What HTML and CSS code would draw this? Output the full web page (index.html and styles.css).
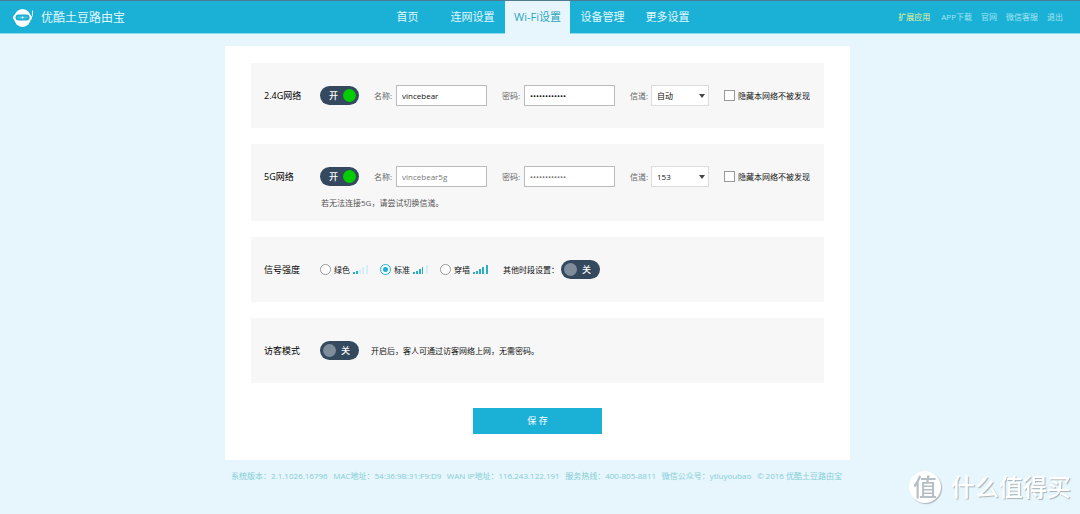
FILE: index.html
```html
<!DOCTYPE html>
<html lang="zh-CN">
<head>
<meta charset="utf-8">
<meta name="viewport" content="width=device-width, initial-scale=1">
<title>优酷土豆路由宝</title>
<link rel="stylesheet" href="styles.css">
</head>
<body>
<header class="header">
  <a class="brand" href="#">
    <svg class="brand-logo" viewBox="0 0 22 18" aria-hidden="true">
      <ellipse cx="10.5" cy="9" rx="8.5" ry="9" fill="#fff"/>
      <rect x="1" y="6" width="19" height="5" rx="2.5" fill="#fff"/>
      <rect x="3.5" y="5.5" width="14" height="6" rx="3" fill="#1bb1d6"/>
      <rect x="5.5" y="7.5" width="10" height="2" rx="1" fill="#4cc3df"/>
      <circle cx="10.5" cy="8.5" r="1" fill="#fff"/>
      <path d="M20.5 1.5V6.5L19 9" fill="none" stroke="#d9f4fa" stroke-width="1"/>
    </svg>
    <span>优酷土豆路由宝</span>
  </a>
  <nav class="tabs">
    <a class="tab" href="#">首页</a>
    <a class="tab" href="#">连网设置</a>
    <a class="tab tab-active" href="#" aria-current="page">Wi-Fi设置</a>
    <a class="tab" href="#">设备管理</a>
    <a class="tab" href="#">更多设置</a>
  </nav>
  <nav class="links">
    <a class="link link-hot" href="#">扩展应用</a>
    <a class="link" href="#">APP下载</a>
    <a class="link" href="#">官网</a>
    <a class="link" href="#">微信客服</a>
    <a class="link" href="#">退出</a>
  </nav>
</header>

<div class="page">
  <main class="panel">
    <form class="form">
      <section class="card">
        <div class="row">
          <h2 class="title">2.4G网络</h2>
          <button class="switch switch-on" type="button" role="switch" aria-checked="true" aria-label="2.4G网络">开</button>
          <div class="field">
            <label class="label" for="name24">名称:</label>
            <input class="input" id="name24" type="text" value="vincebear">
          </div>
          <div class="field">
            <label class="label" for="pass24">密码:</label>
            <input class="input" id="pass24" type="password" value="abcdefghijkl">
          </div>
          <div class="field">
            <label class="label label-narrow" for="chan24">信道:</label>
            <span class="picker">
              <select class="select" id="chan24"><option>自动</option></select>
              <svg class="picker-arrow" viewBox="0 0 6 4" aria-hidden="true"><path d="M0 0H6L3 4Z" fill="#444"/></svg>
            </span>
          </div>
          <label class="check"><input class="box" type="checkbox">隐藏本网络不被发现</label>
        </div>
      </section>

      <section class="card card-noted">
        <div class="row">
          <h2 class="title">5G网络</h2>
          <button class="switch switch-on" type="button" role="switch" aria-checked="true" aria-label="5G网络">开</button>
          <div class="field">
            <label class="label" for="name5">名称:</label>
            <input class="input input-dim" id="name5" type="text" value="vincebear5g">
          </div>
          <div class="field">
            <label class="label" for="pass5">密码:</label>
            <input class="input input-dim" id="pass5" type="password" value="abcdefghijkl">
          </div>
          <div class="field">
            <label class="label label-narrow" for="chan5">信道:</label>
            <span class="picker">
              <select class="select" id="chan5"><option>153</option></select>
              <svg class="picker-arrow" viewBox="0 0 6 4" aria-hidden="true"><path d="M0 0H6L3 4Z" fill="#444"/></svg>
            </span>
          </div>
          <label class="check"><input class="box" type="checkbox">隐藏本网络不被发现</label>
        </div>
        <p class="note">若无法连接5G，请尝试切换信道。</p>
      </section>

      <section class="card">
        <div class="row">
          <h2 class="title">信号强度</h2>
          <div class="options">
            <label class="option"><input class="radio" type="radio" name="power">绿色
              <svg class="bars" viewBox="0 0 15 9" aria-hidden="true">
                <path class="bars-lit" d="M0 7h2v2H0zM3 6h2v3H3z"/>
                <path class="bars-off" d="M6 4h2v5H6zM9 2h2v7H9zM13 0h2v9h-2z"/>
              </svg></label>
            <label class="option"><input class="radio" type="radio" name="power" checked>标准
              <svg class="bars" viewBox="0 0 15 9" aria-hidden="true">
                <path class="bars-lit" d="M0 7h2v2H0zM3 6h2v3H3zM6 4h2v5H6zM9 2h1v7H9z"/>
                <path class="bars-off" d="M13 0h2v9h-2z"/>
              </svg></label>
            <label class="option"><input class="radio" type="radio" name="power">穿墙
              <svg class="bars" viewBox="0 0 15 9" aria-hidden="true">
                <path class="bars-lit" d="M0 7h2v2H0zM3 6h2v3H3zM6 4h2v5H6zM9 2h2v7H9zM13 0h2v9h-2z"/>
              </svg></label>
          </div>
          <div class="period">
            <span id="period">其他时段设置：</span>
            <button class="switch" type="button" role="switch" aria-checked="false" aria-labelledby="period">关</button>
          </div>
        </div>
      </section>

      <section class="card">
        <div class="row">
          <h2 class="title">访客模式</h2>
          <button class="switch" type="button" role="switch" aria-checked="false" aria-label="访客模式">关</button>
          <p class="hint">开启后，客人可通过访客网络上网，无需密码。</p>
        </div>
      </section>

      <button class="save" type="submit">保 存</button>
    </form>
  </main>

  <footer class="footer">
    <span>系统版本：2.1.1026.16796</span>
    <span>MAC地址：54:36:9B:31:F9:D9</span>
    <span>WAN IP地址：116.243.122.191</span>
    <span>服务热线：400-805-8811</span>
    <span>微信公众号：ytluyoubao</span>
    <span>© 2016 优酷土豆路由宝</span>
  </footer>
</div>

<div class="stamp"><span class="stamp-badge">值</span><span>什么值得买</span></div>
</body>
</html>
```

FILE: styles.css
```css
* { box-sizing: border-box; }

body {
  margin: 0;
  min-height: 100vh;
  background: #e6f6fc;
  color: #111;
  font: 8px/12px "Open Sans", "Noto Sans CJK SC", sans-serif;
}

h2, p { margin: 0; font: inherit; }
a { color: inherit; text-decoration: none; }
button, input, select { font: inherit; }

/* Header */
.header {
  display: grid;
  grid-template-columns: 1fr auto 1fr;
  align-items: center;
  height: 34px;
  padding: 0 17px 0 12px;
  border-top: 1px solid #4d7c91;
  border-bottom: 1px solid #8fdbe8;
  background: #1bb1d6;
  color: #e2f7fc;
}
.brand { display: flex; align-items: center; gap: 7px; font-size: 12px; line-height: 16px; }
.brand-logo { width: 22px; height: 18px; }
.tabs { display: flex; height: 33px; }
.tab { width: 65px; font-size: 11px; line-height: 32px; text-align: center; white-space: nowrap; }
.tab-active { background: #e6f6fc; color: #2aa5bf; }
.links { display: flex; justify-content: flex-end; gap: 9px; padding-bottom: 2px; color: #a5e5f2; }
.link-hot { margin-right: 2px; color: #e9f59c; }

/* Panel */
.page { padding: 12px 5px 0 0; }
.panel {
  max-width: 625px;
  margin: 0 auto;
  padding: 17px 26px 26px;
  background: #fff;
}
.form { display: flex; flex-direction: column; gap: 16px; }
.card { padding: 22px 13px; background: #f7f7f7; }
.card-noted { padding-bottom: 12px; }
.row { display: flex; align-items: center; gap: 15px; min-height: 21px; white-space: nowrap; }
.title { flex: none; width: 41px; font-size: 9px; color: #000; }
.note { margin: 10px 0 0 57px; color: #555; }
.hint { margin-left: -3px; }

.field { display: flex; align-items: center; }
.label { width: 22px; color: #666; }
.label-narrow { width: 21px; }
.input {
  width: 91px;
  height: 21px;
  padding: 0 5px;
  border: 1px solid #bbb;
  border-radius: 0;
  background: #fff;
  color: #111;
}
.input-dim { color: #777; }

.picker { position: relative; }
.select {
  display: block;
  width: 58px;
  height: 21px;
  padding: 0 5px;
  border: 1px solid #ddd;
  border-radius: 0;
  appearance: none;
  background: #fff;
  color: #111;
}
.picker-arrow { position: absolute; top: 9px; right: 4px; width: 6px; height: 4px; pointer-events: none; }

.check { display: flex; align-items: center; gap: 3px; }
.box { appearance: none; width: 11px; height: 11px; margin: 0; border: 1px solid #999; background: #fff; }

/* Switch */
.switch {
  display: flex;
  flex: none;
  align-items: center;
  justify-content: space-between;
  width: 39px;
  height: 19px;
  padding: 0 9px 0 3px;
  border: 0;
  border-radius: 10px;
  background: #34495e;
  color: #fff;
  font-size: 9px;
  font-weight: 500;
}
.switch::before { content: ""; width: 13px; height: 13px; border-radius: 50%; background: #7f8c9a; }
.switch-on { flex-direction: row-reverse; padding: 0 3px 0 9px; }
.switch-on::before { background: #0c0; }

/* Signal strength */
.options { display: flex; }
.option { display: flex; align-items: center; gap: 3px; width: 60px; }
.radio {
  appearance: none;
  width: 11px;
  height: 11px;
  margin: 0;
  border: 1px solid #999;
  border-radius: 50%;
  background: #fff;
}
.radio:checked { border-color: #1bb1d6; background: radial-gradient(circle, #1bb1d6 0 2px, #fff 3px); }
.bars { width: 15px; height: 9px; }
.bars-lit { fill: #2ab0c4; }
.bars-off { fill: #d5f0f6; }
.period { display: flex; align-items: center; gap: 2px; margin-left: -12px; }

.save {
  align-self: center;
  width: 129px;
  height: 26px;
  margin-top: 9px;
  border: 0;
  background: #1bb1d6;
  color: #fff;
  font-size: 9px;
}

/* Footer */
.footer {
  display: flex;
  flex-wrap: wrap;
  justify-content: space-between;
  max-width: 625px;
  margin: 0 auto;
  padding: 10px 8px 10px 6px;
  color: #84cdd6;
}

/* Corner stamp */
.stamp {
  position: fixed;
  right: 9px;
  bottom: 11px;
  display: flex;
  align-items: center;
  gap: 10px;
  color: #fff;
  font-size: 24px;
  font-weight: 500;
  line-height: 32px;
  text-shadow: 1px 1px 1px #a9b4b8;
}
.stamp-badge {
  width: 32px;
  border-radius: 50%;
  background: #fff;
  box-shadow: 1px 1px 1px #a9b4b8;
  color: #b5bfc4;
  text-align: center;
  text-shadow: none;
}
```
